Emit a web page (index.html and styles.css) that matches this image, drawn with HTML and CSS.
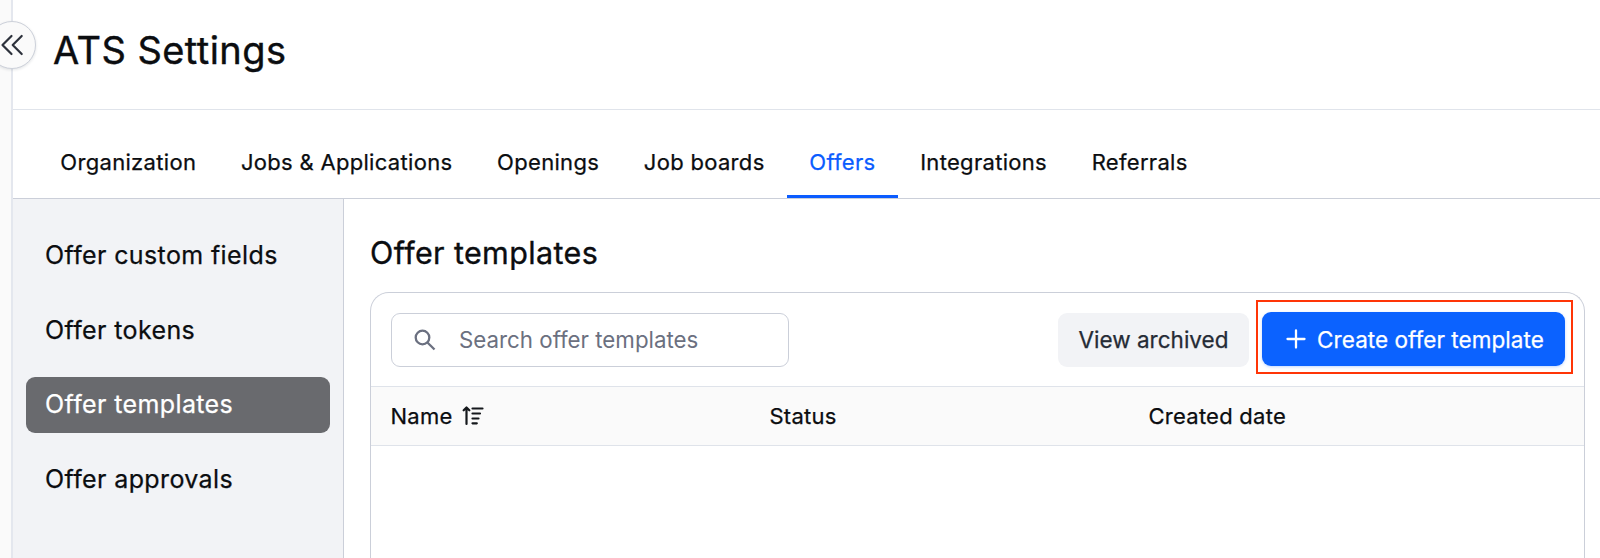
FILE: index.html
```html
<!DOCTYPE html>
<html lang="en">
<head>
<meta charset="utf-8">
<title>ATS Settings</title>
<link rel="stylesheet" href="styles.css">
</head>
<body>
<div class="app">
  <div class="rail">
    <button class="collapse" aria-label="Collapse navigation">
      <svg width="24" height="24" viewBox="0 0 24 24" fill="none" stroke="#2d323c" stroke-width="2.200" stroke-linecap="round" stroke-linejoin="round"><path d="M11.500 3 2.500 12l9 9M21.700 3l-9 9 9 9"/></svg>
    </button>
  </div>
  <div class="page">
    <header class="header"><h1 class="title">ATS Settings</h1></header>
    <nav class="tabs">
      <a class="tab">Organization</a>
      <a class="tab">Jobs &amp; Applications</a>
      <a class="tab">Openings</a>
      <a class="tab">Job boards</a>
      <a class="tab tab-active">Offers</a>
      <a class="tab">Integrations</a>
      <a class="tab">Referrals</a>
    </nav>
    <div class="body">
      <aside class="sidebar">
        <a class="side-item">Offer custom fields</a>
        <a class="side-item">Offer tokens</a>
        <a class="side-item side-active">Offer templates</a>
        <a class="side-item">Offer approvals</a>
      </aside>
      <main class="content">
        <h2 class="heading">Offer templates</h2>
        <section class="panel">
          <div class="toolbar">
            <div class="search">
              <svg class="search-icon" width="22" height="22" viewBox="0 0 22 22" fill="none" stroke="#6b7080" stroke-width="2.300"><circle cx="8.500" cy="8.500" r="6.800"/><path d="m13.200 13.200 7.300 7.300"/></svg>
              <span class="placeholder">Search offer templates</span>
            </div>
            <button class="btn btn-secondary">View archived</button>
            <div class="highlight">
              <button class="btn btn-primary">
                <svg width="20" height="20" viewBox="0 0 20 20" fill="none" stroke="#fff" stroke-width="2.300" stroke-linecap="round"><path d="M10 1.500v17M1.500 10h17"/></svg>
                <span>Create offer template</span>
              </button>
            </div>
          </div>
          <div class="columns">
            <div class="column"><span>Name</span>
              <svg class="sort-icon" width="22" height="20" viewBox="0 0 22 20" fill="none" stroke="#15181c" stroke-width="2.200" stroke-linecap="round" stroke-linejoin="round"><path d="M4.500 18V2M1.700 4.300 4.500 1.500l2.800 2.800M10.500 2.500h10M10.500 7.500h7.500M10.500 12.500h6M10.500 17.300h4.300"/></svg>
            </div>
            <div class="column">Status</div>
            <div class="column">Created date</div>
          </div>
        </section>
      </main>
    </div>
  </div>
</div>
</body>
</html>
```
FILE: styles.css
```css
* { box-sizing: border-box; }
body { margin: 0; background: #fff; color: #0b0d10; font-family: Inter, "Liberation Sans", sans-serif; overflow: hidden; }
.app { display: flex; height: 558px; }
.rail { position: relative; flex: none; width: 13px; background: #fafafa; border-right: 2px solid #e4e7ee; }
.collapse { position: absolute; left: -12px; top: 21px; width: 48px; height: 48px; padding: 0; display: flex; align-items: center; justify-content: center; border: 1.500px solid #cdd1da; border-radius: 50%; background: #fafafa; box-shadow: 0 1px 3px rgba(20, 30, 50, .12); }
.page { flex: 1; min-width: 0; display: flex; flex-direction: column; }
.header { height: 110px; padding: 27px 40px 0; border-bottom: 1px solid #e0e4eb; }
.title { margin: 0; font-size: 38px; line-height: 46px; font-weight: 400; letter-spacing: .45px; -webkit-text-stroke: .4px; }
.tabs { display: flex; height: 89px; padding: 17px 25px 0; border-bottom: 1px solid #cbcfd9; }
.tab { padding: 21px 22.350px 0; font-size: 22px; line-height: 28px; letter-spacing: .31px; -webkit-text-stroke: .25px; border-bottom: 3px solid transparent; }
.tab-active { color: #0b5cff; border-color: #0b5cff; }
.body { flex: 1; display: flex; min-height: 0; }
.sidebar { flex: none; width: 331px; padding: 29px 13px; display: flex; flex-direction: column; gap: 18.700px; background: #f2f3f6; border-right: 1px solid #cbcfd9; }
.side-item { flex: none; height: 56px; padding: 0 19px; border-radius: 9px; font-size: 25px; line-height: 55px; letter-spacing: .38px; -webkit-text-stroke: .25px; }
.side-active { background: #696a6e; color: #fff; }
.content { flex: 1; padding: 34px 15px 0 26px; display: flex; flex-direction: column; }
.heading { margin: 0; height: 59px; font-size: 30.500px; line-height: 40px; font-weight: 400; letter-spacing: .37px; -webkit-text-stroke: .35px; }
.panel { flex: 1; border: 1px solid #cbcfd9; border-bottom: 0; border-radius: 19px 19px 0 0; overflow: hidden; }
.toolbar { display: flex; align-items: center; height: 94px; padding: 0 11px 0 20px; border-bottom: 1px solid #dfe3ea; }
.search { display: flex; align-items: center; gap: 23px; width: 398px; height: 54px; padding-left: 22px; margin-right: auto; border: 1px solid #cbcfd9; border-radius: 9px; color: #6b7080; font-size: 22.300px; }
.btn { display: flex; align-items: center; justify-content: center; height: 54px; padding: 0; border: 0; border-radius: 9px; font-family: inherit; font-size: 22.500px; white-space: nowrap; -webkit-text-stroke: .25px; }
.btn-secondary { width: 191px; margin-right: 7px; background: #f2f3f6; color: #252b35; }
.highlight { height: 74px; width: 317px; margin-bottom: 5px; padding: 10px 6px 6px 4px; border: 2px solid #ff3507; }
.btn-primary { gap: 11px; width: 303px; padding-left: 3px; background: #0b62ff; color: #fff; box-shadow: 0 1px 3px rgba(11, 98, 255, .25); letter-spacing: .05px; }
.columns { display: grid; grid-template-columns: 379px 379px 1fr; align-items: center; height: 59px; padding-left: 19.500px; background: #fafafa; border-bottom: 1px solid #dfe3ea; font-size: 22px; letter-spacing: .25px; -webkit-text-stroke: .25px; }
.column { display: flex; align-items: center; gap: 9px; }
.sort-icon { -webkit-text-stroke: 0; }
```
